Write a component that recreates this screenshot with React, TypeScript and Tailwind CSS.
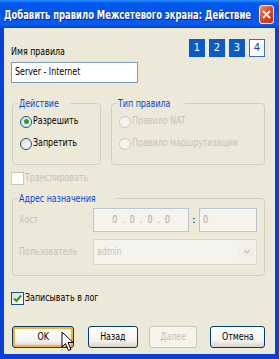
import { useState } from 'react';

const font = 'font-["DejaVu_Sans_Condensed","DejaVu_Sans",sans-serif]';

// Tahoma-like narrow text: the dialog's type is noticeably condensed
function T({ children, className, center }: { children: React.ReactNode; className?: string; center?: boolean }) {
  return (
    <span
      className={`inline-block whitespace-nowrap scale-x-[0.8] ${center ? 'origin-center' : 'origin-left'} ${className ?? ''}`}
    >
      {children}
    </span>
  );
}

function Radio({ label, checked, disabled }: { label: string; checked?: boolean; disabled?: boolean }) {
  return (
    <div className="flex items-center h-[13px] overflow-hidden">
      <span
        className={`shrink-0 w-[12px] h-[12px] rounded-full border flex items-center justify-center ${
          disabled ? 'border-[#cac8bb] bg-[#f4f3ee]' : 'border-[#1c5180] bg-[linear-gradient(135deg,#dcdcd6,#ffffff)]'
        }`}
      >
        {checked && <span className="w-[5px] h-[5px] rounded-full bg-[#21a121]" />}
      </span>
      <T className={`ml-[1px] text-[11px] ${disabled ? 'text-[#c6c3b4]' : 'text-black'}`}>{label}</T>
    </div>
  );
}

function Checkbox({ label, checked, disabled }: { label: string; checked?: boolean; disabled?: boolean }) {
  return (
    <div className="flex items-center h-[14px]">
      <span
        className={`shrink-0 w-[13px] h-[13px] border flex items-center justify-center ${
          disabled ? 'border-[#cac8bb] bg-white' : 'border-[#1c5180] bg-[linear-gradient(135deg,#dcdcd6,#ffffff)]'
        }`}
      >
        {checked && (
          <svg width="9" height="9" viewBox="0 0 9 9">
            <path d="M1 4.5 L3.5 7 L8 1.5" stroke="#21a121" strokeWidth="2" fill="none" />
          </svg>
        )}
      </span>
      <T className={`ml-[1px] text-[11px] ${disabled ? 'text-[#c6c3b4]' : 'text-black'}`}>{label}</T>
    </div>
  );
}

function Group({ title, className, children }: { title: string; className?: string; children: React.ReactNode }) {
  return (
    <fieldset className={`border border-[#d0d0bf] rounded-[4px] ${className ?? ''}`}>
      <legend className="ml-[5px] px-[1px] text-[11px] leading-[13px] text-[#0046d5]">
        <T>{title}</T>
      </legend>
      {children}
    </fieldset>
  );
}

function XpButton({ label, width, focused, disabled }: { label: string; width: string; focused?: boolean; disabled?: boolean }) {
  return (
    <button
      type="button"
      className={`${width} h-[22px] rounded-[3px] border text-[11px] flex items-center justify-center ${
        disabled
          ? 'border-[#c9c7ba] bg-[#f5f4ea] text-[#c6c3b4]'
          : 'border-[#003c74] bg-[linear-gradient(to_bottom,#ffffff,#f3f3ef_70%,#d6d0c5)] text-black'
      } ${focused ? 'shadow-[inset_0_0_0_2px_#f8b330]' : ''}`}
    >
      <T center>{label}</T>
    </button>
  );
}

export default function App() {
  const [name] = useState('Server - Internet');

  return (
    <div className={`relative w-[279px] h-[359px] overflow-hidden flex flex-col bg-[#0840d8] ${font}`}>
      {/* Title bar */}
      <div className="h-[28px] flex items-center justify-between pl-[4px] pr-[5px] bg-[linear-gradient(to_bottom,#2a8cff,#0058ee_12%,#0054e8_50%,#0a5cf0_88%,#003dd7)]">
        <div className="flex-1 min-w-0 overflow-hidden">
          <span className="inline-block whitespace-nowrap origin-left scale-x-[0.72] text-white text-[13px] font-bold [text-shadow:1px_1px_0_#0a1f80]">
            Добавить правило Межсетевого экрана: Действие
          </span>
        </div>
        <span className="shrink-0 w-[15px] h-[19px] rounded-[3px] border border-white bg-[linear-gradient(135deg,#f0906c,#e0461e_50%,#c23010)] flex items-center justify-center">
          <svg width="9" height="9" viewBox="0 0 9 9">
            <path d="M1 1 L8 8 M8 1 L1 8" stroke="white" strokeWidth="1.8" />
          </svg>
        </span>
      </div>

      {/* Body */}
      <div className="flex-1 mx-[4px] mb-[5px] bg-[#ece9d8] pl-[7px] pr-[10px] flex flex-col">
        <div className="flex justify-between">
          <div className="flex flex-col">
            <T className="mt-[17px] text-[11px] leading-[13px] text-black">Имя правила</T>
            <div className="mt-[4px] w-[127px] h-[21px] border border-[#7f9db9] bg-white px-[3px] flex items-center text-[11px] text-black">
              <T>{name}</T>
            </div>
          </div>
          <div className="flex gap-[4px] mt-[11px]">
            {['1', '2', '3'].map((n) => (
              <span key={n} className="w-[16px] h-[18px] bg-[#0a5bc4] text-white text-[11px] flex items-center justify-center">
                {n}
              </span>
            ))}
            <span className="w-[16px] h-[18px] bg-white border border-[#3a6cc0] text-[#0a3d9c] text-[11px] flex items-center justify-center">
              4
            </span>
          </div>
        </div>

        <div className="flex gap-[10px] mt-[14px] ml-[1px]">
          <Group title="Действие" className="w-[124px] h-[68px]">
            <div className="flex flex-col gap-[9px] pl-[7px] pt-[5px]">
              <Radio label="Разрешить" checked />
              <Radio label="Запретить" />
            </div>
          </Group>
          <Group title="Тип правила" className="w-[123px] h-[68px]">
            <div className="flex flex-col gap-[9px] pl-[7px] pt-[5px]">
              <Radio label="Правило NAT" disabled />
              <Radio label="Правило маршрутизации" disabled />
            </div>
          </Group>
        </div>

        <div className="mt-[6px]">
          <Checkbox label="Транслировать" disabled />
        </div>

        <Group title="Адрес назначения" className="mt-[7px] ml-[1px] h-[84px]">
          <div className="flex flex-col pl-[6px] pt-[3px] pr-[7px] gap-[7px]">
            <div className="flex items-center">
              <span className="w-[74px] text-[11px] text-[#c6c3b4]">
                <T>Хост</T>
              </span>
              <div className="w-[96px] h-[24px] border border-[#b9c6d6] bg-[#f4f3ee] flex items-center justify-center text-[11px] text-[#aca899]">
                <T center>0 &nbsp;. &nbsp;0 &nbsp;. &nbsp;0 &nbsp;. &nbsp;0</T>
              </div>
              <span className="w-[10px] text-center text-[11px] text-black">:</span>
              <div className="flex-1 h-[24px] border border-[#b9c6d6] bg-[#f4f3ee] flex items-center px-[3px] text-[11px] text-[#aca899]">
                <T>0</T>
              </div>
            </div>
            <div className="flex items-center">
              <span className="w-[74px] text-[11px] text-[#c6c3b4]">
                <T>Пользователь</T>
              </span>
              <div className="flex-1 h-[26px] border border-[#d8d6cb] bg-[#f4f3ee] flex items-center justify-between pl-[3px] pr-[1px] text-[11px] text-[#c6c3b4]">
                <T>admin</T>
                <span className="w-[16px] h-[22px] rounded-[2px] bg-[#f0efe8] flex items-center justify-center">
                  <svg width="8" height="6" viewBox="0 0 8 6">
                    <path d="M1 1 L4 4 L7 1" stroke="#c6c3b4" strokeWidth="1.5" fill="none" />
                  </svg>
                </span>
              </div>
            </div>
          </div>
        </Group>

        <div className="mt-[15px]">
          <Checkbox label="Записывать в лог" checked />
        </div>

        <div className="flex mt-[21px] ml-[1px]">
          <XpButton label="OK" width="w-[64px]" focused />
          <div className="ml-[14px]">
            <XpButton label="Назад" width="w-[50px]" />
          </div>
          <div className="ml-[11px]">
            <XpButton label="Далее" width="w-[48px]" disabled />
          </div>
          <div className="ml-[13px]">
            <XpButton label="Отмена" width="w-[55px]" />
          </div>
        </div>
      </div>

      {/* Mouse cursor */}
      <svg className="absolute left-[61px] top-[331px]" width="13" height="21" viewBox="0 0 13 21">
        <path d="M1 1 L1 16 L4.5 12.5 L7.5 19.5 L10 18.5 L7 11.5 L12 11.5 Z" fill="white" stroke="black" strokeWidth="1" />
      </svg>
    </div>
  );
}
